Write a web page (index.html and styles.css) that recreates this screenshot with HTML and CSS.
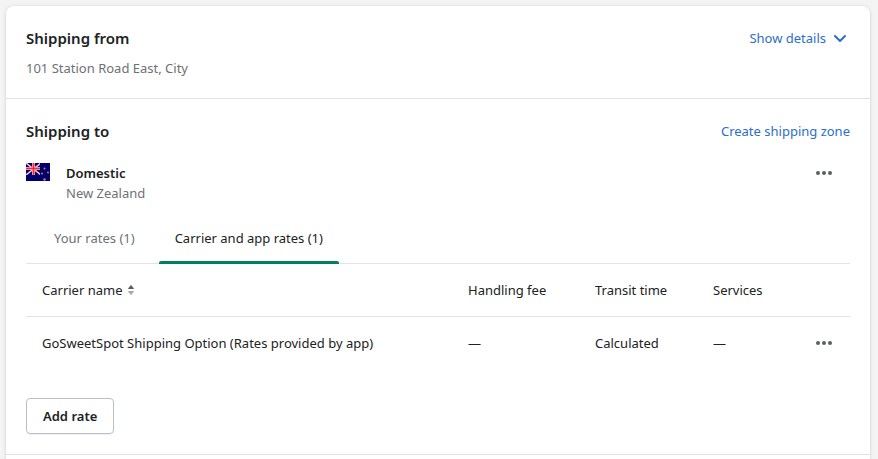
FILE: index.html
```html
<!DOCTYPE html>
<html lang="en">
<head>
    <meta charset="UTF-8">
    <meta name="viewport" content="width=device-width, initial-scale=1.0">
    <title>Shipping</title>
    <link rel="stylesheet" href="styles.css">
</head>
<body>
    <main class="card">
        <section class="section">
            <div class="section-header">
                <h2>Shipping from</h2>
                <button type="button" class="link-button details-button">
                    Show details
                    <svg width="20" height="20" viewBox="0 0 20 20" aria-hidden="true">
                        <path d="M5 8l5 5 5-5" fill="none" stroke="currentColor" stroke-width="2" stroke-linecap="round" stroke-linejoin="round"/>
                    </svg>
                </button>
            </div>
            <p class="address">101 Station Road East, City</p>
        </section>

        <section class="section">
            <div class="section-header">
                <h2>Shipping to</h2>
                <a href="#" class="link-button">Create shipping zone</a>
            </div>

            <div class="zone">
                <svg class="flag" width="24" height="18" viewBox="0 0 24 18" role="img" aria-label="New Zealand flag">
                    <rect width="24" height="18" fill="#00006b"/>
                    <svg width="14" height="12" viewBox="0 0 14 12">
                        <path d="M0 0l15 12M15 0L0 12" stroke="#f3c3cf" stroke-width="1.6"/>
                        <path d="M7.5 0v12M0 5.5h14" stroke="#f3b4c2" stroke-width="3"/>
                        <path d="M7.5 0v12M0 5.5h14" stroke="#f52b35" stroke-width="1.6"/>
                    </svg>
                    <g fill="#d8707f">
                        <circle cx="18.5" cy="5.5" r="1"/>
                        <circle cx="22" cy="9.5" r="1"/>
                        <circle cx="16" cy="10.5" r="1"/>
                        <circle cx="18.5" cy="16.5" r="1.2"/>
                    </g>
                </svg>
                <div class="zone-name">
                    <h3>Domestic</h3>
                    <p>New Zealand</p>
                </div>
                <button type="button" class="more-button" aria-label="Zone actions">
                    <svg width="20" height="20" viewBox="0 0 20 20" fill="#5c5f62" aria-hidden="true">
                        <circle cx="4" cy="10" r="2"/>
                        <circle cx="10" cy="10" r="2"/>
                        <circle cx="16" cy="10" r="2"/>
                    </svg>
                </button>
            </div>

            <div class="tabs" role="tablist">
                <button type="button" class="tab" role="tab" aria-selected="false">Your rates (1)</button>
                <button type="button" class="tab tab-active" role="tab" aria-selected="true">Carrier and app rates (1)</button>
            </div>

            <table class="rates">
                <thead>
                    <tr>
                        <th>
                            <button type="button" class="sort-button">
                                Carrier name
                                <svg width="8" height="12" viewBox="0 0 8 12" aria-hidden="true">
                                    <path d="M4 1.5L6.5 4.500h-5z" fill="#5c5f62" stroke="#5c5f62" stroke-linejoin="round"/>
                                    <path d="M4 10.5L6.5 7.500h-5z" fill="#a6a8aa" stroke="#a6a8aa" stroke-linejoin="round"/>
                                </svg>
                            </button>
                        </th>
                        <th class="col-fee">Handling fee</th>
                        <th class="col-time">Transit time</th>
                        <th class="col-services">Services</th>
                        <td class="col-actions"></td>
                    </tr>
                </thead>
                <tbody>
                    <tr>
                        <td>GoSweetSpot Shipping Option (Rates provided by app)</td>
                        <td>—</td>
                        <td>Calculated</td>
                        <td>—</td>
                        <td>
                            <button type="button" class="more-button" aria-label="Rate actions">
                                <svg width="20" height="20" viewBox="0 0 20 20" fill="#5c5f62" aria-hidden="true">
                                    <circle cx="4" cy="10" r="2"/>
                                    <circle cx="10" cy="10" r="2"/>
                                    <circle cx="16" cy="10" r="2"/>
                                </svg>
                            </button>
                        </td>
                    </tr>
                </tbody>
            </table>

            <button type="button" class="add-button">Add rate</button>
        </section>
    </main>
</body>
</html>
```
FILE: styles.css
```css
* {
    box-sizing: border-box;
}
body {
    margin: 0;
    padding: 6px 8px 0 6px;
    background-color: #f4f4f4;
    color: #202223;
    font-family: "Segoe UI", "Noto Sans", sans-serif;
    font-size: 13px;
    line-height: 20px;
}
h2, h3, p {
    margin: 0;
}
h2 {
    font-size: 15px;
    line-height: 24px;
    font-weight: 600;
}
h3 {
    font-size: 13px;
    line-height: 20px;
    font-weight: 600;
}
button {
    padding: 0;
    border: none;
    background: none;
    color: inherit;
    font: inherit;
    cursor: pointer;
}
svg {
    display: block;
}
.card {
    min-height: calc(100vh - 6px);
    background-color: white;
    border-radius: 8px 8px 0 0;
    box-shadow: 0 0 5px rgba(23, 24, 24, 0.08), 0 1px 2px rgba(0, 0, 0, 0.15);
}
.section {
    padding: 20px;
    border-bottom: 1px solid #e1e3e5;
}
.section-header {
    display: flex;
    justify-content: space-between;
    align-items: center;
}
.link-button {
    color: #2c6ecb;
    text-decoration: none;
}
.details-button {
    display: flex;
    align-items: center;
    gap: 4px;
}
.address {
    margin-top: 8px;
    color: #6d7175;
}
.zone {
    display: flex;
    align-items: flex-start;
    margin-top: 20px;
}
.zone-name {
    flex: 1;
    margin-left: 16px;
}
.zone-name p {
    color: #6d7175;
}
.more-button {
    display: block;
    margin-left: auto;
}
.zone .more-button {
    margin-right: 16px;
}
.tabs {
    display: flex;
    gap: 8px;
    margin-top: 10px;
    padding-left: 12px;
    border-bottom: 1px solid #e1e3e5;
}
.tab {
    display: flex;
    flex-direction: column;
    margin-bottom: -1px;
    padding: 15px 16px 0;
    color: #6d7175;
}
.tab::after {
    content: "";
    height: 3px;
    margin: 13px -16px 0;
    border-radius: 2px 2px 0 0;
}
.tab-active {
    color: #202223;
}
.tab-active::after {
    background-color: #008060;
}
.rates {
    width: 100%;
    border-collapse: collapse;
}
.rates th, .rates td {
    padding: 16px;
    text-align: left;
    font-weight: 400;
}
.rates thead {
    border-bottom: 1px solid #e1e3e5;
}
.col-fee {
    width: 127px;
}
.col-time {
    width: 118px;
}
.col-services {
    width: 92px;
}
.col-actions {
    width: 61px;
}
.sort-button {
    display: flex;
    align-items: center;
    gap: 4px;
}
.add-button {
    margin-top: 29px;
    padding: 7px 16px;
    border: 1px solid #babfc3;
    border-radius: 4px;
    box-shadow: 0 1px 0 rgba(0, 0, 0, 0.05);
    font-weight: 600;
}
```
